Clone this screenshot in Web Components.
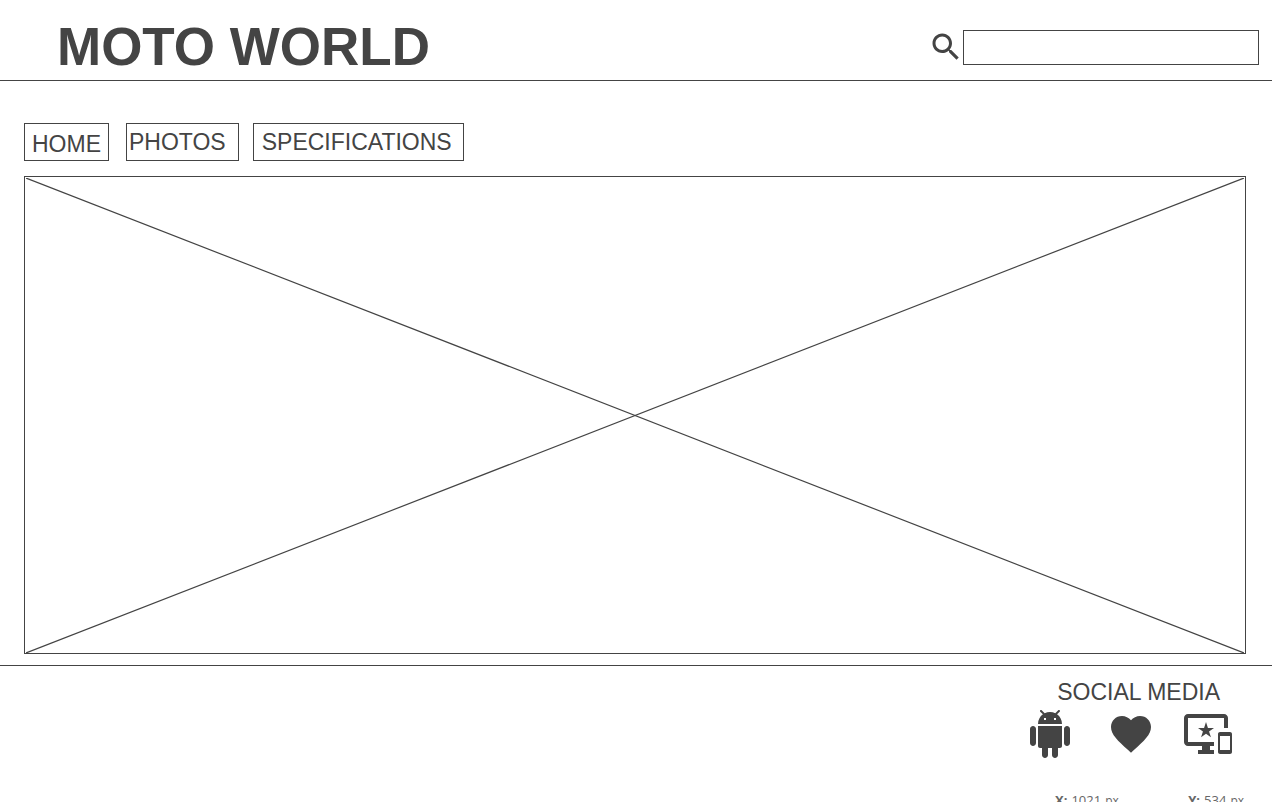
<!DOCTYPE html>
<html lang="en">
<head>
<meta charset="utf-8">
<title>Moto World</title>
<style>
html, body { margin: 0; height: 100%; }
body { background: #fff; color: #444; font-family: "Liberation Sans", Arial, sans-serif; font-size: 23px; line-height: 26px; --ink: #444; }
</style>
</head>
<body>
<moto-page>
  <site-header slot="header">MOTO WORLD</site-header>
  <site-nav slot="nav">
    <nav-item href="#home" class="home">HOME</nav-item>
    <nav-item href="#photos" class="photos">PHOTOS</nav-item>
    <nav-item href="#specifications" class="specs">SPECIFICATIONS</nav-item>
  </site-nav>
  <image-placeholder></image-placeholder>
  <social-footer slot="footer">SOCIAL MEDIA</social-footer>
</moto-page>
<script>
const define = (name, markup) => {
  const template = document.createElement("template");
  template.innerHTML = markup;
  customElements.define(name, class extends HTMLElement {
    constructor() {
      super();
      this.attachShadow({ mode: "open" }).append(template.content.cloneNode(true));
    }
    connectedCallback() {
      const link = this.shadowRoot.querySelector("a[data-link]");
      if (link) link.href = this.getAttribute("href");
      const label = this.getAttribute("label");
      if (link && label) link.setAttribute("aria-label", label);
    }
  });
};

define("moto-page", `
  <style>
    :host { display: flex; flex-direction: column; height: 100vh; overflow: hidden; }
    main { flex: 1; display: flex; flex-direction: column; gap: 15px; padding: 42px 26px 11px 24px; min-height: 0; }
  </style>
  <slot name="header"></slot>
  <main><slot name="nav"></slot><slot></slot></main>
  <slot name="footer"></slot>`);

define("site-header", `
  <style>
    :host { display: block; border-bottom: 1px solid var(--ink); }
    header { display: flex; align-items: center; justify-content: space-between; padding: 16px 13px 2px 57px; }
    h1 { margin: 0; font-size: 53px; line-height: 62px; font-weight: bold; }
  </style>
  <header><h1><slot></slot></h1><search-box></search-box></header>`);

define("search-box", `
  <style>
    :host { display: block; }
    form { display: flex; align-items: center; }
    label { display: flex; margin-right: -1px; }
    svg { width: 36px; height: 36px; fill: var(--ink); }
    input { box-sizing: border-box; width: 296px; height: 35px; margin: 0; padding: 4px 8px; border: 1px solid var(--ink); border-radius: 0; background: #fff; color: inherit; font: inherit; }
  </style>
  <form role="search">
    <label for="q" aria-label="Search"><svg viewBox="0 0 24 24" aria-hidden="true"><path d="M15.5 14h-.79l-.28-.27C15.41 12.59 16 11.11 16 9.5 16 5.91 13.09 3 9.5 3S3 5.91 3 9.5 5.91 16 9.5 16c1.61 0 3.09-.59 4.23-1.57l.27.28v.79l5 4.99L20.49 19l-4.99-5zm-6 0C7.01 14 5 11.99 5 9.5S7.01 5 9.5 5 14 7.01 14 9.5 11.99 14 9.5 14z"/></svg></label>
    <input id="q" type="text">
  </form>`);

define("site-nav", `
  <style>
    :host { display: block; }
    nav { display: flex; gap: 14px; }
    ::slotted(.home) { --pad: 7px 7px 3px 7px; margin-right: 3px; }
    ::slotted(.photos) { --pad: 5px 12px 5px 2px; }
    ::slotted(.specs) { --pad: 5px 11px 5px 8px; }
  </style>
  <nav><slot></slot></nav>`);

define("nav-item", `
  <style>
    :host { display: block; }
    a { display: block; box-sizing: border-box; height: 38px; padding: var(--pad); border: 1px solid var(--ink); color: inherit; text-decoration: none; white-space: nowrap; }
  </style>
  <a data-link><slot></slot></a>`);

define("image-placeholder", `
  <style>
    :host { display: flex; flex: 1; min-height: 0; box-sizing: border-box; padding: 1px 1px 0; border: 1px solid var(--ink); }
    svg { width: 100%; height: 100%; stroke: var(--ink); stroke-width: 1.2; }
  </style>
  <svg role="img" aria-label="Image placeholder"><line x1="0" y1="0" x2="100%" y2="100%"/><line x1="0" y1="100%" x2="100%" y2="0"/></svg>`);

define("icon-link", `
  <style>
    :host { display: block; }
    a { display: block; color: inherit; }
    ::slotted(svg) { display: block; width: 48px; height: 48px; fill: var(--ink); }
  </style>
  <a data-link><slot></slot></a>`);

define("social-footer", `
  <style>
    :host { display: block; height: 136px; border-top: 1px solid var(--ink); }
    footer { display: flex; flex-direction: column; align-items: flex-end; padding: 13px 40px 0 24px; }
    h2 { margin: 0 12px 5px 0; font-size: 23px; line-height: 26px; font-weight: normal; }
    .icons { display: flex; justify-content: space-between; width: 206px; }
    .icons icon-link:nth-child(2) { margin-right: -4px; }
    cursor-position { margin-top: 33px; }
  </style>
  <footer>
    <h2><slot></slot></h2>
    <div class="icons">
      <icon-link href="#android" label="Android"><svg viewBox="0 0 24 24"><path d="M6 18c0 .55.45 1 1 1h1v3.500c0 .83.67 1.500 1.500 1.500s1.500-.67 1.500-1.500V19h2v3.500c0 .83.67 1.500 1.500 1.500s1.500-.67 1.500-1.500V19h1c.55 0 1-.45 1-1V8H6v10zM3.500 8C2.670 8 2 8.670 2 9.500v7c0 .83.67 1.500 1.500 1.500S5 17.330 5 16.500v-7C5 8.670 4.330 8 3.500 8zm17 0c-.83 0-1.500.67-1.500 1.500v7c0 .83.67 1.500 1.500 1.500s1.500-.67 1.500-1.500v-7c0-.83-.67-1.500-1.500-1.500zm-4.970-5.840l1.300-1.300c.2-.2.2-.51 0-.71-.2-.2-.51-.2-.71 0l-1.480 1.480C13.850 1.230 12.950 1 12 1c-.96 0-1.860.23-2.660.63L7.850.15c-.2-.2-.51-.2-.71 0-.2.2-.2.51 0 .71l1.310 1.310C6.970 3.260 6 5.010 6 7h12c0-1.990-.97-3.750-2.470-4.840zM10 5H9V4h1v1zm5 0h-1V4h1v1z"/></svg></icon-link>
      <icon-link href="#favorites" label="Favorites"><svg viewBox="0 0 24 24"><path d="M12 21.350l-1.450-1.320C5.400 15.360 2 12.280 2 8.500 2 5.420 4.420 3 7.500 3c1.740 0 3.410.81 4.500 2.090C13.090 3.810 14.760 3 16.500 3 19.580 3 22 5.420 22 8.500c0 3.780-3.400 6.860-8.550 11.540L12 21.350z"/></svg></icon-link>
      <icon-link href="#devices" label="Devices"><svg viewBox="0 0 24 24"><path d="M23 11.010L18 11c-.55 0-1 .45-1 1v9c0 .55.45 1 1 1h5c.55 0 1-.45 1-1v-9c0-.55-.45-.99-1-.99zM23 20h-5v-7h5v7zM20 2H2C.89 2 0 2.890 0 4v12c0 1.100.89 2 2 2h7v2H7v2h8v-2h-2v-2h2v-2H2V4h18v5h2V4c0-1.110-.9-2-2-2zm-8.030 7L11 6l-.97 3H7l2.470 1.760-.94 2.910 2.470-1.800 2.470 1.800-.94-2.910L15 9h-3.030z"/></svg></icon-link>
    </div>
    <cursor-position></cursor-position>
  </footer>`);

define("cursor-position", `
  <style>
    :host { display: flex; justify-content: space-between; width: 189px; margin-right: -12px; color: #666; font: 13px/18px "Open Sans", "Noto Sans", sans-serif; white-space: nowrap; }
    span { display: flex; align-items: baseline; gap: 4px; }
    small { font-size: 12px; }
  </style>
  <span><b>X:</b>1021<small>px</small></span><span><b>Y:</b>534<small>px</small></span>`);
</script>
</body>
</html>
